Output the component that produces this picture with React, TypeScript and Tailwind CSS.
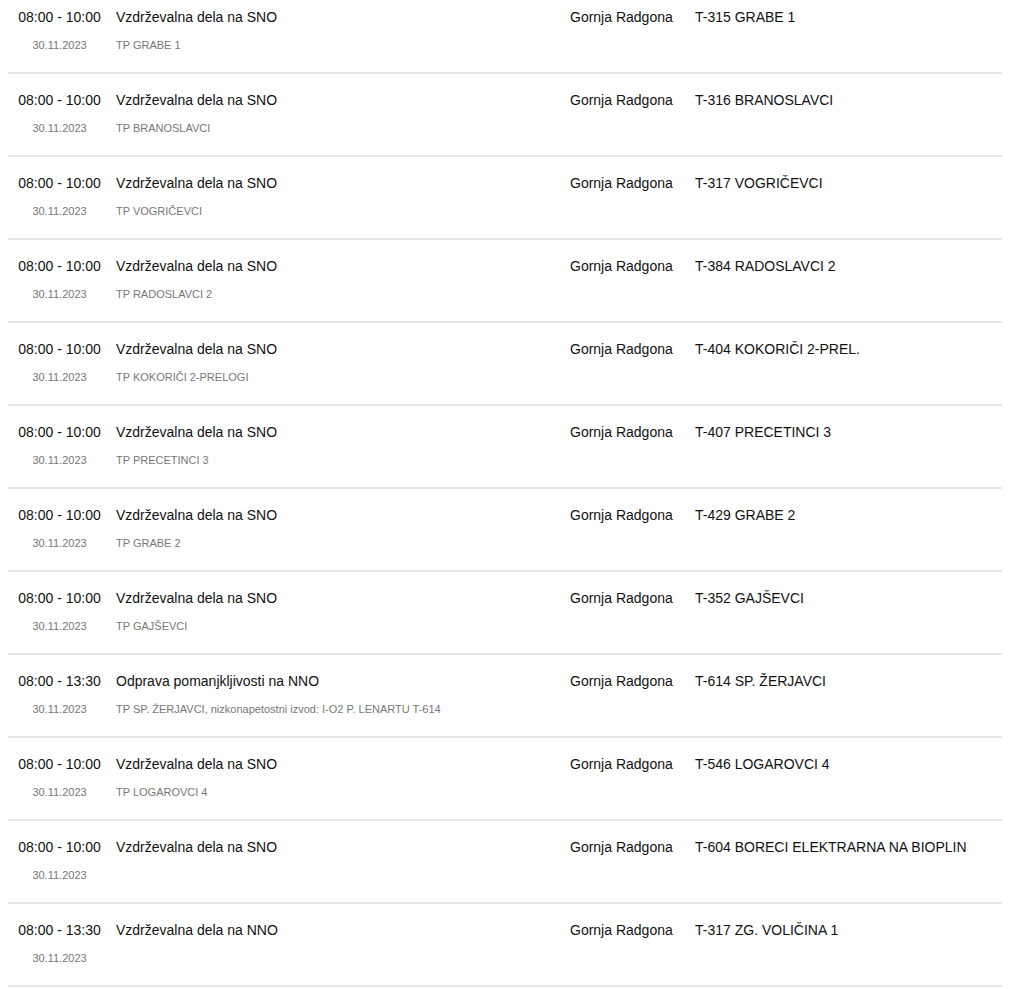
import React from "react";

type Row = { time: string; title: string; sub?: string; loc: string; station: string };

const rows: Row[] = [
  { time: "08:00 - 10:00", title: "Vzdrževalna dela na SNO", sub: "TP GRABE 1", loc: "Gornja Radgona", station: "T-315 GRABE 1" },
  { time: "08:00 - 10:00", title: "Vzdrževalna dela na SNO", sub: "TP BRANOSLAVCI", loc: "Gornja Radgona", station: "T-316 BRANOSLAVCI" },
  { time: "08:00 - 10:00", title: "Vzdrževalna dela na SNO", sub: "TP VOGRIČEVCI", loc: "Gornja Radgona", station: "T-317 VOGRIČEVCI" },
  { time: "08:00 - 10:00", title: "Vzdrževalna dela na SNO", sub: "TP RADOSLAVCI 2", loc: "Gornja Radgona", station: "T-384 RADOSLAVCI 2" },
  { time: "08:00 - 10:00", title: "Vzdrževalna dela na SNO", sub: "TP KOKORIČI 2-PRELOGI", loc: "Gornja Radgona", station: "T-404 KOKORIČI 2-PREL." },
  { time: "08:00 - 10:00", title: "Vzdrževalna dela na SNO", sub: "TP PRECETINCI 3", loc: "Gornja Radgona", station: "T-407 PRECETINCI 3" },
  { time: "08:00 - 10:00", title: "Vzdrževalna dela na SNO", sub: "TP GRABE 2", loc: "Gornja Radgona", station: "T-429 GRABE 2" },
  { time: "08:00 - 10:00", title: "Vzdrževalna dela na SNO", sub: "TP GAJŠEVCI", loc: "Gornja Radgona", station: "T-352 GAJŠEVCI" },
  { time: "08:00 - 13:30", title: "Odprava pomanjkljivosti na NNO", sub: "TP SP. ŽERJAVCI, nizkonapetostni izvod: I-O2 P. LENARTU T-614", loc: "Gornja Radgona", station: "T-614 SP. ŽERJAVCI" },
  { time: "08:00 - 10:00", title: "Vzdrževalna dela na SNO", sub: "TP LOGAROVCI 4", loc: "Gornja Radgona", station: "T-546 LOGAROVCI 4" },
  { time: "08:00 - 10:00", title: "Vzdrževalna dela na SNO", loc: "Gornja Radgona", station: "T-604 BORECI ELEKTRARNA NA BIOPLIN" },
  { time: "08:00 - 13:30", title: "Vzdrževalna dela na NNO", loc: "Gornja Radgona", station: "T-317 ZG. VOLIČINA 1" },
];

export default function App() {
  return (
    <div className="bg-white min-h-[989px] overflow-hidden" style={{ fontFamily: '"Liberation Sans", Arial, sans-serif' }}>
      <div className="-mt-[9px] ml-[8px] w-[994px]">
        {rows.map((r, i) => (
          <div key={i} className="border-b-2 border-[#e6e6e6] h-[83px] pt-[18px]">
            <div className="flex text-[14px] leading-[16px] text-[#111]">
              <div className="w-[103px] text-center">{r.time}</div>
              <div className="ml-[5px] w-[454px]">{r.title}</div>
              <div className="w-[125px]">{r.loc}</div>
              <div>{r.station}</div>
            </div>
            <div className="flex mt-[13px] text-[11px] leading-[14px] text-[#777]">
              <div className="w-[103px] text-center">30.11.2023</div>
              <div className="ml-[5px]">{r.sub ?? ""}</div>
            </div>
          </div>
        ))}
      </div>
    </div>
  );
}
